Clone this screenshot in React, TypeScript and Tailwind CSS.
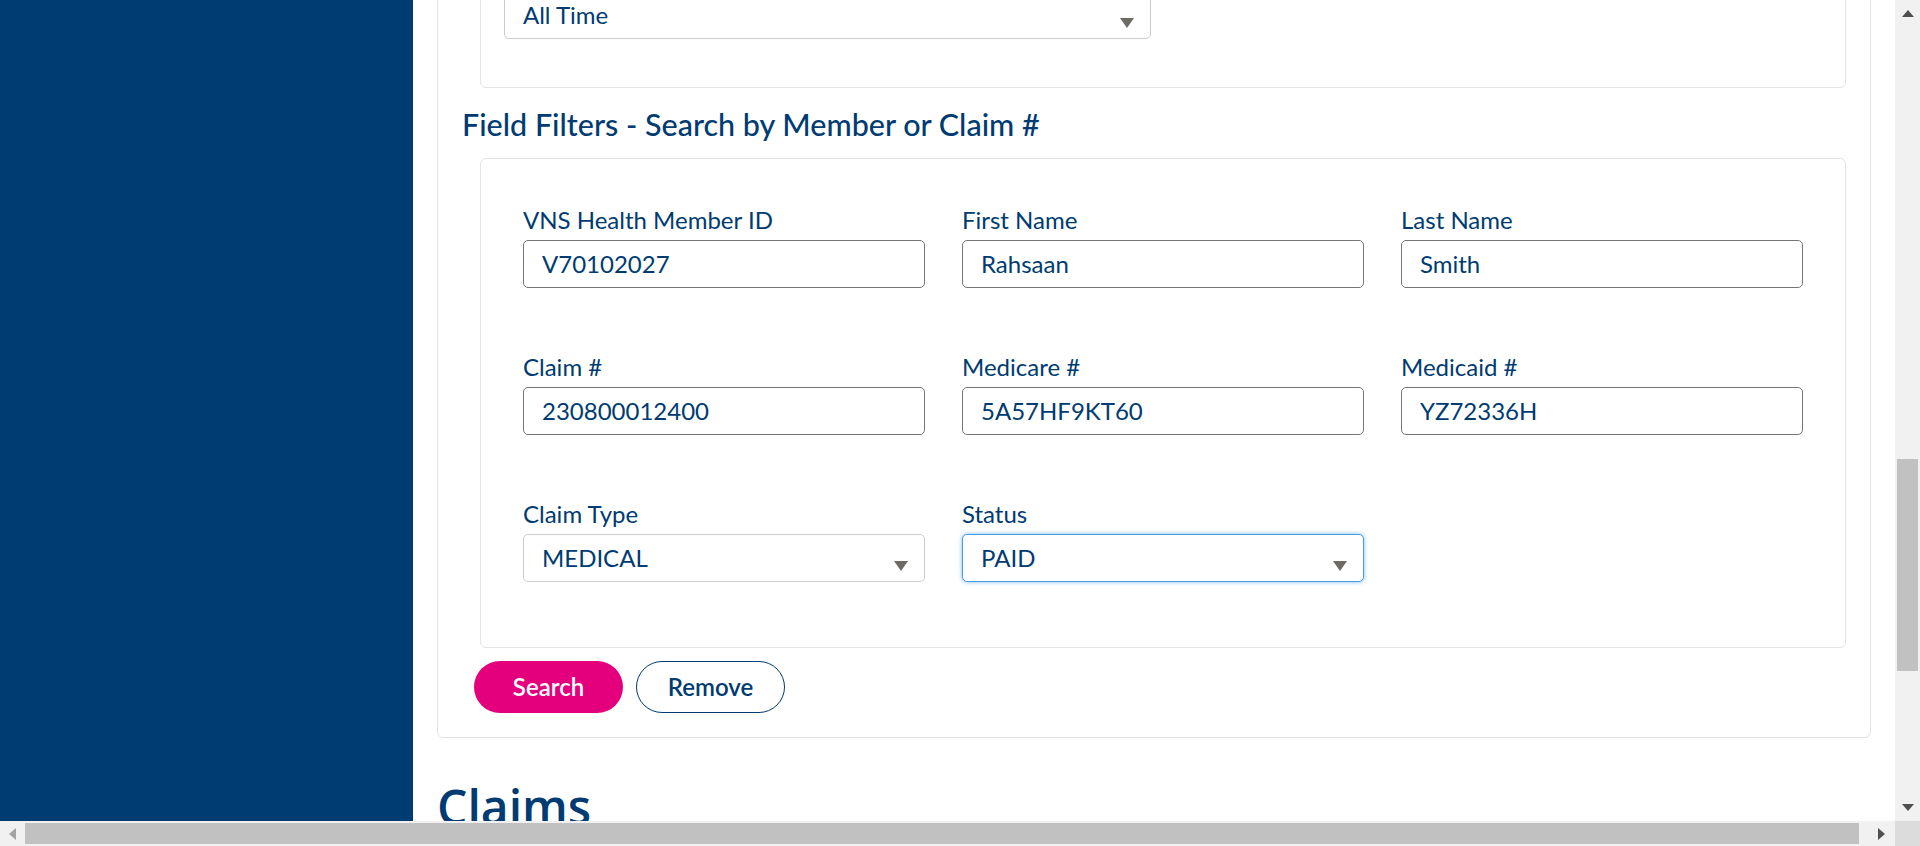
import React from "react";

const FIELDS = [
  { label: "VNS Health Member ID", value: "V70102027" },
  { label: "First Name", value: "Rahsaan" },
  { label: "Last Name", value: "Smith" },
  { label: "Claim #", value: "230800012400" },
  { label: "Medicare #", value: "5A57HF9KT60" },
  { label: "Medicaid #", value: "YZ72336H" },
];

function Caret() {
  return (
    <svg width="14" height="10" viewBox="0 0 14 10" aria-hidden className="shrink-0">
      <path d="M0 0h14L7 10z" fill="#6e6a65" />
    </svg>
  );
}

function SelectBox({ value, focused = false }: { value: string; focused?: boolean }) {
  return (
    <div
      className={
        focused
          ? "flex h-[48px] items-center justify-between rounded-[5px] border border-[#4a9be6] bg-white pl-[18px] pr-[16px] shadow-[0_0_4px_rgba(74,155,230,0.7)]"
          : "flex h-[48px] items-center justify-between rounded-[5px] border border-[#cbcbcb] bg-white pl-[18px] pr-[16px]"
      }
    >
      <span className="text-[24px] leading-none text-[#003b71]">{value}</span>
      <span className="mt-[16px]">
        <Caret />
      </span>
    </div>
  );
}

function Field({ label, children }: { label: string; children: React.ReactNode }) {
  return (
    <div className="flex flex-col gap-[6px]">
      <span className="text-[24px] leading-[28px] text-[#003b71]">{label}</span>
      {children}
    </div>
  );
}

function TextBox({ value }: { value: string }) {
  return (
    <div className="flex h-[48px] items-center rounded-[5px] border border-[#767676] bg-white pl-[18px] text-[24px] leading-none text-[#003b71]">
      {value}
    </div>
  );
}

function Scrollbars() {
  return (
    <>
      {/* vertical */}
      <div className="absolute right-0 top-0 flex h-[821px] w-[25px] flex-col items-center bg-[#f1f1f1]">
        <svg width="12" height="7" viewBox="0 0 12 7" className="mt-[10px]" aria-hidden>
          <path d="M0 7L6 0l6 7z" fill="#505050" />
        </svg>
        <div className="mt-[442px] h-[212px] w-[21px] bg-[#c1c1c1]" />
        <svg width="12" height="7" viewBox="0 0 12 7" className="mt-[133px]" aria-hidden>
          <path d="M0 0h12L6 7z" fill="#505050" />
        </svg>
      </div>
      {/* horizontal */}
      <div className="absolute bottom-0 left-0 flex h-[25px] w-[1895px] items-center bg-[#f1f1f1]">
        <svg width="7" height="12" viewBox="0 0 7 12" className="ml-[9px]" aria-hidden>
          <path d="M7 0v12L0 6z" fill="#a3a3a3" />
        </svg>
        <div className="ml-[9px] h-[21px] w-[1834px] bg-[#c1c1c1]" />
        <svg width="7" height="12" viewBox="0 0 7 12" className="ml-[19px]" aria-hidden>
          <path d="M0 0v12l7-6z" fill="#505050" />
        </svg>
      </div>
      <div className="absolute bottom-0 right-0 h-[25px] w-[25px] bg-[#dcdcdc]" />
    </>
  );
}

export default function App() {
  return (
    <div className="relative h-[846px] w-[1920px] overflow-hidden bg-white font-['Lato','Liberation_Sans',sans-serif]">
      <div className="flex h-[821px] w-[1895px] overflow-hidden">
        <aside className="w-[413px] shrink-0 bg-[#003b71]" />
        <main className="min-w-0 flex-1 px-[24px]">
          <section className="-mt-[55px] rounded-[6px] border border-[#e3e3e3] pb-[24px] pt-[20px]">
            {/* date range card */}
            <div className="ml-[42px] mr-[24px] rounded-[6px] border border-[#e3e3e3] pb-[48px] pl-[23px] pt-[24px]">
              <div className="w-[647px]">
                <SelectBox value="All Time" />
              </div>
            </div>

            <h2 className="ml-[24px] mb-[15px] mt-[17px] text-[30.5px] font-medium leading-[38px] text-[#003b71]">
              Field Filters - Search by Member or Claim #
            </h2>

            <div className="ml-[42px] mr-[24px] rounded-[6px] border border-[#e3e3e3] px-[42px] pb-[65px] pt-[47px]">
              <div className="grid grid-cols-3 gap-x-[37px] gap-y-[65px]">
                {FIELDS.map((f) => (
                  <Field key={f.label} label={f.label}>
                    <TextBox value={f.value} />
                  </Field>
                ))}
                <Field label="Claim Type">
                  <SelectBox value="MEDICAL" />
                </Field>
                <Field label="Status">
                  <SelectBox value="PAID" focused />
                </Field>
              </div>
            </div>

            <div className="ml-[36px] mt-[13px] flex gap-[13px]">
              <button
                type="button"
                className="h-[52px] w-[149px] rounded-full bg-[#e4007c] text-[24px] font-semibold text-white"
              >
                Search
              </button>
              <button
                type="button"
                className="h-[52px] w-[149px] rounded-full border border-[#003b71] bg-white text-[24px] font-semibold text-[#003b71]"
              >
                Remove
              </button>
            </div>
          </section>

          <h1 className="mt-[40px] font-['Open_Sans',sans-serif] text-[48px] font-semibold leading-[58px] text-[#003b71]">
            Claims
          </h1>
        </main>
      </div>
      <Scrollbars />
    </div>
  );
}
